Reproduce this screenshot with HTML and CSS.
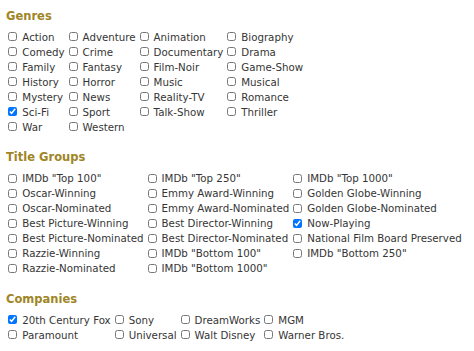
FILE: index.html
```html
<!DOCTYPE html>
<html lang="en">
<head>
<meta charset="utf-8">
<title>Filters</title>
<link rel="stylesheet" href="styles.css">
</head>
<body>
<div class="page">
  <section class="group">
    <h2 class="group-title">Genres</h2>
    <div class="opts cols-4">
      <label class="opt"><input type="checkbox"><span>Action</span></label>
      <label class="opt"><input type="checkbox"><span>Adventure</span></label>
      <label class="opt"><input type="checkbox"><span>Animation</span></label>
      <label class="opt"><input type="checkbox"><span>Biography</span></label>
      <label class="opt"><input type="checkbox"><span>Comedy</span></label>
      <label class="opt"><input type="checkbox"><span>Crime</span></label>
      <label class="opt"><input type="checkbox"><span>Documentary</span></label>
      <label class="opt"><input type="checkbox"><span>Drama</span></label>
      <label class="opt"><input type="checkbox"><span>Family</span></label>
      <label class="opt"><input type="checkbox"><span>Fantasy</span></label>
      <label class="opt"><input type="checkbox"><span>Film-Noir</span></label>
      <label class="opt"><input type="checkbox"><span>Game-Show</span></label>
      <label class="opt"><input type="checkbox"><span>History</span></label>
      <label class="opt"><input type="checkbox"><span>Horror</span></label>
      <label class="opt"><input type="checkbox"><span>Music</span></label>
      <label class="opt"><input type="checkbox"><span>Musical</span></label>
      <label class="opt"><input type="checkbox"><span>Mystery</span></label>
      <label class="opt"><input type="checkbox"><span>News</span></label>
      <label class="opt"><input type="checkbox"><span>Reality-TV</span></label>
      <label class="opt"><input type="checkbox"><span>Romance</span></label>
      <label class="opt"><input type="checkbox" checked><span>Sci-Fi</span></label>
      <label class="opt"><input type="checkbox"><span>Sport</span></label>
      <label class="opt"><input type="checkbox"><span>Talk-Show</span></label>
      <label class="opt"><input type="checkbox"><span>Thriller</span></label>
      <label class="opt"><input type="checkbox"><span>War</span></label>
      <label class="opt"><input type="checkbox"><span>Western</span></label>
    </div>
  </section>

  <section class="group">
    <h2 class="group-title">Title Groups</h2>
    <div class="opts cols-3">
      <label class="opt"><input type="checkbox"><span>IMDb "Top 100"</span></label>
      <label class="opt"><input type="checkbox"><span>IMDb "Top 250"</span></label>
      <label class="opt"><input type="checkbox"><span>IMDb "Top 1000"</span></label>
      <label class="opt"><input type="checkbox"><span>Oscar-Winning</span></label>
      <label class="opt"><input type="checkbox"><span>Emmy Award-Winning</span></label>
      <label class="opt"><input type="checkbox"><span>Golden Globe-Winning</span></label>
      <label class="opt"><input type="checkbox"><span>Oscar-Nominated</span></label>
      <label class="opt"><input type="checkbox"><span>Emmy Award-Nominated</span></label>
      <label class="opt"><input type="checkbox"><span>Golden Globe-Nominated</span></label>
      <label class="opt"><input type="checkbox"><span>Best Picture-Winning</span></label>
      <label class="opt"><input type="checkbox"><span>Best Director-Winning</span></label>
      <label class="opt"><input type="checkbox" checked><span>Now-Playing</span></label>
      <label class="opt"><input type="checkbox"><span>Best Picture-Nominated</span></label>
      <label class="opt"><input type="checkbox"><span>Best Director-Nominated</span></label>
      <label class="opt"><input type="checkbox"><span>National Film Board Preserved</span></label>
      <label class="opt"><input type="checkbox"><span>Razzie-Winning</span></label>
      <label class="opt"><input type="checkbox"><span>IMDb "Bottom 100"</span></label>
      <label class="opt"><input type="checkbox"><span>IMDb "Bottom 250"</span></label>
      <label class="opt"><input type="checkbox"><span>Razzie-Nominated</span></label>
      <label class="opt"><input type="checkbox"><span>IMDb "Bottom 1000"</span></label>
    </div>
  </section>

  <section class="group">
    <h2 class="group-title">Companies</h2>
    <div class="opts cols-4">
      <label class="opt"><input type="checkbox" checked><span>20th Century Fox</span></label>
      <label class="opt"><input type="checkbox"><span>Sony</span></label>
      <label class="opt"><input type="checkbox"><span>DreamWorks</span></label>
      <label class="opt"><input type="checkbox"><span>MGM</span></label>
      <label class="opt"><input type="checkbox"><span>Paramount</span></label>
      <label class="opt"><input type="checkbox"><span>Universal</span></label>
      <label class="opt"><input type="checkbox"><span>Walt Disney</span></label>
      <label class="opt"><input type="checkbox"><span>Warner Bros.</span></label>
    </div>
  </section>

  <div class="next-row">
    <div class="next-field"></div>
    <div class="next-box"></div>
  </div>
</div>
</body>
</html>
```

FILE: styles.css
```css
html, body {
  margin: 0;
  padding: 0;
  background: #ffffff;
}

.page {
  padding: 8.5px 0 0 6px;
  font-family: "DejaVu Sans", Verdana, sans-serif;
  font-size: 10.25px;
  color: #353535;
}

.group + .group {
  margin-top: 15.5px;
}

.group-title {
  margin: 0 0 6px 0;
  font-size: 11.5px;
  line-height: 15px;
  font-weight: bold;
  color: #9f8526;
}

.opts {
  display: grid;
  column-gap: 1.7px;
  justify-content: start;
}

.cols-4 {
  grid-template-columns: repeat(4, max-content);
}

.cols-3 {
  grid-template-columns: repeat(3, max-content);
}

.opt {
  display: flex;
  align-items: center;
  height: 15px;
  line-height: 15px;
  white-space: nowrap;
}

.opt input {
  width: 9px;
  height: 9px;
  margin: -1px 5px 0 2.3px;
  flex: none;
}

.next-row {
  display: flex;
  align-items: flex-start;
  margin-top: 10px;
  gap: 2px;
}

.next-field {
  width: 110px;
  height: 10px;
  border-top: 1px solid #eeeeee;
}

.next-box {
  width: 8px;
  height: 8px;
  border: 1px solid #dddddd;
  border-bottom: none;
}
```
